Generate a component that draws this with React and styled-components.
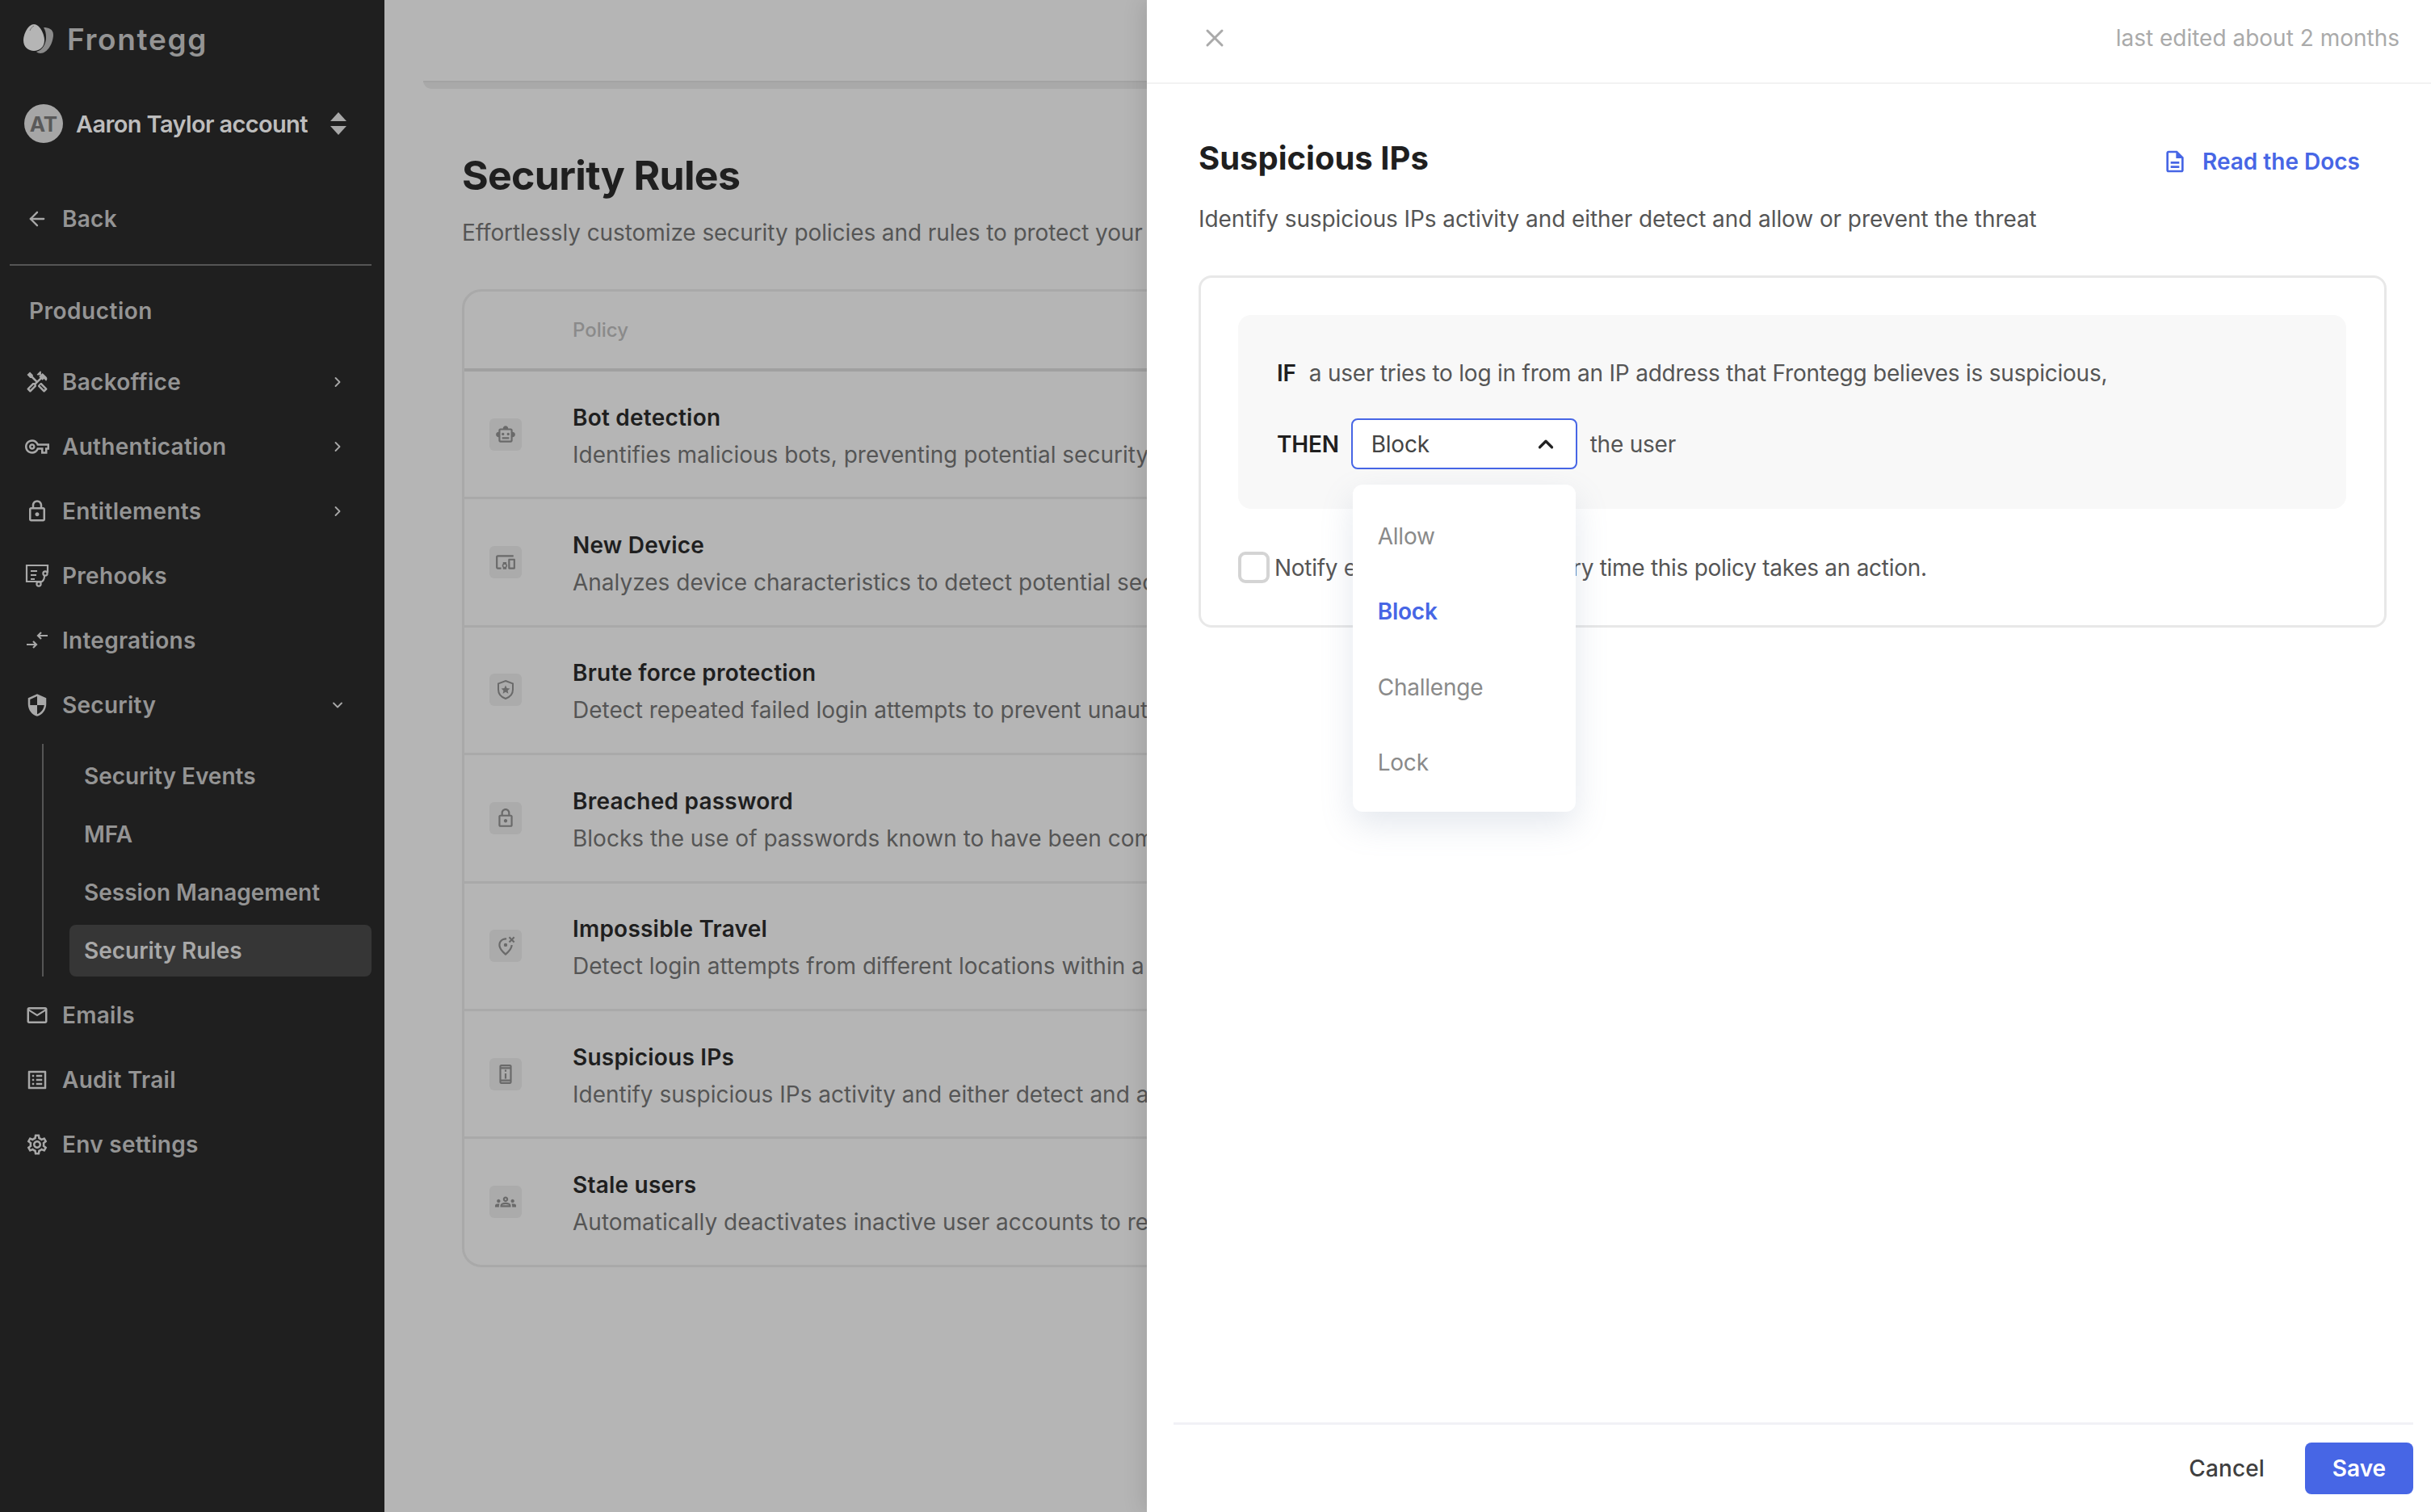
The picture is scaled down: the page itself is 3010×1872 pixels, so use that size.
import styled, { createGlobalStyle } from 'styled-components';
import { ArrowLeft, ChevronDown, ChevronRight, ChevronUp, X } from 'lucide-react';
import {
  MdOutlineHandyman,
  MdOutlineVpnKey,
  MdOutlineLock,
  MdSecurity,
  MdOutlineMailOutline,
  MdOutlineListAlt,
  MdOutlineSettings,
  MdOutlineSmartToy,
  MdOutlineDevicesOther,
  MdOutlineWrongLocation,
  MdOutlinePermDeviceInformation,
  MdOutlineGroups,
  MdOutlineDescription,
} from 'react-icons/md';

const GlobalStyle = createGlobalStyle`
  html, body {
    margin: 0;
    height: 100%;
    font-family: Inter, "Liberation Sans", sans-serif;
  }
  * { box-sizing: border-box; }
`;

const Page = styled.div`
  position: relative;
  display: flex;
  width: 3010px;
  height: 1872px;
  overflow: hidden;
  background: #b5b5b5;
`;

const Sidebar = styled.aside`
  flex: 0 0 476px;
  padding-right: 16px;
  background: #1f1f1f;
  color: #949494;
`;

const LogoRow = styled.div`
  display: flex;
  align-items: center;
  gap: 16px;
  height: 96px;
  padding-left: 29px;
`;

const LogoText = styled.span`
  font-size: 37px;
  font-weight: 600;
  letter-spacing: 0.045em;
  color: #949494;
`;

const AccountRow = styled.div`
  display: flex;
  align-items: center;
  height: 80px;
  margin-top: 17px;
  padding-left: 30px;
`;

const Avatar = styled.span`
  display: flex;
  align-items: center;
  justify-content: center;
  flex: 0 0 48px;
  height: 48px;
  border-radius: 50%;
  background: #a6a6a6;
  color: #5a5a5a;
  font-size: 26px;
  font-weight: 700;
`;

const AccountName = styled.span`
  flex: 0 0 331px;
  padding-left: 16px;
  font-size: 29px;
  font-weight: 600;
  letter-spacing: -0.022em;
  color: #bdbdbd;
`;

const NavRow = styled.div`
  display: flex;
  align-items: center;
  height: 80px;
  padding-left: 31px;
  font-size: 28px;
  font-weight: 600;
  letter-spacing: 0.01em;
  color: #949494;
`;

const BackRow = styled(NavRow)`
  margin-top: 38px;
`;

const NavIcon = styled.span`
  display: flex;
  align-items: center;
  justify-content: center;
  flex: 0 0 30px;
  width: 30px;
  height: 30px;
  margin-right: 16px;
  color: #a8a8a8;
`;

const NavLabel = styled.span`
  flex: 1;
`;

const NavChevron = styled.span`
  display: flex;
  width: 20px;
  margin-right: 32px;
  color: #a8a8a8;
`;

const Divider = styled.div`
  height: 2px;
  margin: 16px 0 16px 12px;
  background: #555;
`;

const EnvLabel = styled.div`
  display: flex;
  align-items: center;
  height: 80px;
  margin-bottom: 8px;
  padding-left: 36px;
  font-size: 28px;
  font-weight: 600;
  letter-spacing: 0.018em;
  color: #949494;
`;

const SubList = styled.div`
  display: flex;
  flex-direction: column;
  gap: 8px;
  margin: 8px 0 8px 52px;
  padding: 8px 0 0 32px;
  border-left: 2px solid #555;
`;

const SubItem = styled.div`
  display: flex;
  align-items: center;
  height: 64px;
  padding-left: 18px;
  border-radius: 8px;
  font-size: 28px;
  font-weight: 600;
  color: ${(p) => (p.$active ? '#a8a8a8' : '#949494')};
  background: ${(p) => (p.$active ? '#363636' : 'transparent')};
`;

const Main = styled.main`
  flex: 1;
  min-width: 0;
  padding-left: 96px;
`;

const TopStrip = styled.div`
  height: 10px;
  margin: 100px 0 0 -48px;
  border-top: 2px solid #a3a3a3;
  border-bottom-left-radius: 10px;
  background: #a9a9a9;
`;

const PageTitle = styled.h1`
  margin: 77px 0 0;
  font-size: 50px;
  line-height: 60px;
  font-weight: 700;
  letter-spacing: -0.014em;
  color: #1f1f1f;
`;

const PageLead = styled.p`
  margin: 21px 0 0;
  font-size: 28px;
  line-height: 40px;
  letter-spacing: -0.003em;
  white-space: nowrap;
  color: #555;
`;

const RulesTable = styled.div`
  width: 2380px;
  margin-top: 50px;
  border: 3px solid #a9a9a9;
  border-radius: 24px;
`;

const TableHead = styled.div`
  display: flex;
  align-items: center;
  height: 99px;
  padding-left: 134px;
  border-bottom: 4px solid #a0a0a0;
  font-size: 24px;
  font-weight: 500;
  color: #8a8a8a;
`;

const RuleRow = styled.div`
  display: flex;
  align-items: center;
  height: ${(p) => (p.$last ? '156px' : '158.4px')};
  padding-left: 31px;
  border-bottom: ${(p) => (p.$last ? 'none' : '3px solid #a9a9a9')};
`;

const RuleIcon = styled.span`
  display: flex;
  align-items: center;
  justify-content: center;
  width: 40px;
  height: 40px;
  margin-right: 63px;
  border-radius: 6px;
  background: #ababab;
  color: #6a6a6a;
`;

const RuleText = styled.div`
  display: flex;
  flex-direction: column;
  gap: 6px;
  padding-top: 4px;
  white-space: nowrap;
`;

const RuleTitle = styled.span`
  font-size: 28px;
  line-height: 40px;
  font-weight: 600;
  letter-spacing: 0.008em;
  color: #1f1f1f;
`;

const RuleDesc = styled.span`
  font-size: 28px;
  line-height: 40px;
  color: #555;
`;

const Drawer = styled.section`
  position: absolute;
  top: 0;
  right: 0;
  bottom: 0;
  display: flex;
  flex-direction: column;
  width: 1590px;
  background: #fff;
  box-shadow: -6px 0 24px rgba(0, 0, 0, 0.1);
`;

const DrawerHead = styled.header`
  display: flex;
  align-items: center;
  justify-content: space-between;
  flex: 0 0 104px;
  padding: 0 39px 8px 66px;
  border-bottom: 2px solid #f2f2f2;
  color: #aaa;
`;

const EditedAt = styled.span`
  font-size: 28px;
  color: #aaa;
`;

const DrawerBody = styled.div`
  flex: 1;
  padding: 0 55px 0 64px;
`;

const TitleRow = styled.div`
  display: flex;
  align-items: center;
  justify-content: space-between;
  height: 60px;
  margin-top: 61px;
  padding-right: 33px;
`;

const DrawerTitle = styled.h2`
  margin: 0;
  font-size: 40px;
  font-weight: 700;
  color: #1f1f1f;
`;

const DocsLink = styled.a`
  display: flex;
  align-items: center;
  gap: 18px;
  margin-top: 10px;
  font-size: 28px;
  font-weight: 600;
  color: #4766e5;
`;

const DrawerLead = styled.p`
  margin: 26px 0 0;
  font-size: 28px;
  line-height: 40px;
  letter-spacing: -0.003em;
  color: #555;
`;

const PolicyCard = styled.div`
  margin-top: 50px;
  padding: 46px 47px 52px 46px;
  border: 3px solid #e8e8e8;
  border-radius: 16px;
`;

const ConditionBox = styled.div`
  display: flex;
  flex-direction: column;
  gap: 39px;
  padding: 55px 48px 49px;
  border-radius: 16px;
  background: #f8f8f8;
`;

const ConditionRow = styled.div`
  display: flex;
  align-items: center;
  font-size: 28px;
  letter-spacing: -0.008em;
  color: #555;
`;

const Keyword = styled.span`
  margin-right: ${(p) => p.$gap}px;
  font-weight: 600;
  color: #1f1f1f;
`;

const SelectBox = styled.div`
  position: relative;
  display: flex;
  align-items: center;
  justify-content: space-between;
  width: 280px;
  height: 63px;
  margin-right: 16px;
  padding: 0 22px 0 23px;
  border: 2px solid #4766e5;
  border-radius: 8px;
  background: #fff;
  color: #444;
`;

const Menu = styled.ul`
  position: absolute;
  top: 80px;
  left: 0;
  width: 276px;
  height: 405px;
  margin: 0;
  padding: 17px 0 0;
  border-radius: 12px;
  background: #fff;
  box-shadow: 0 16px 40px rgba(120, 140, 170, 0.2);
  list-style: none;
`;

const MenuItem = styled.li`
  display: flex;
  align-items: center;
  height: 93.5px;
  padding-left: 31px;
  font-weight: ${(p) => (p.$selected ? 600 : 400)};
  color: ${(p) => (p.$selected ? '#4766e5' : '#8a8a8a')};
`;

const NotifyRow = styled.label`
  display: flex;
  align-items: center;
  gap: 6px;
  margin-top: 53px;
  font-size: 28px;
  letter-spacing: -0.01em;
  color: #555;
`;

const CheckBox = styled.span`
  width: 39px;
  height: 39px;
  border: 4px solid #d4d4d4;
  border-radius: 9px;
`;

const DrawerFooter = styled.footer`
  display: flex;
  align-items: center;
  justify-content: flex-end;
  gap: 50px;
  flex: 0 0 111px;
  margin: 0 22px 0 33px;
  border-top: 3px solid #f1f1f6;
`;

const CancelButton = styled.button`
  padding: 0;
  border: none;
  background: none;
  font: 500 28px Inter, sans-serif;
  letter-spacing: 0.005em;
  color: #3f3f3f;
`;

const SaveButton = styled.button`
  width: 134px;
  height: 64px;
  border: none;
  border-radius: 8px;
  background: #4766e5;
  font: 600 28px Inter, sans-serif;
  color: #fff;
`;

const EggLogo = () => (
  <svg width="38" height="38" viewBox="0 0 38 38">
    <path d="M25 5c6 0 12 2 12 9 0 10-7 23-16 23-2 0-4-1-5-2 8-2 12-10 12-18 0-5-1-9-3-12z" fill="#8a8a8a" />
    <path d="M13 1c7 0 13 12 13 20 0 8-6 13-13 13S0 29 0 21C0 13 6 1 13 1z" fill="#b5b5b5" />
    <path d="M8 9c1-3 3-5 5-6" fill="none" stroke="#777" strokeWidth="1" />
  </svg>
);

const UpDown = () => (
  <svg width="20" height="28" viewBox="0 0 20 28" fill="#a8a8a8">
    <path d="M10 0l10 11H0z" />
    <path d="M10 28L0 17h20z" />
  </svg>
);

const PrehooksIcon = () => (
  <svg width="30" height="30" viewBox="0 0 30 30" fill="none" stroke="#a8a8a8" strokeWidth="2.2">
    <path d="M20 22H2V2h26v9" />
    <path d="M7 9h8M7 14h7M7 19h5" />
    <circle cx="25" cy="12" r="2.6" />
    <circle cx="17" cy="25" r="2.6" />
    <path d="M24 15c0 5-2 7-5 8" />
  </svg>
);

const IntegrationsIcon = () => (
  <svg width="30" height="30" viewBox="0 0 30 30" fill="none" stroke="#a8a8a8" strokeWidth="2.2">
    <path d="M2 20h12M10 16l4 4-4 4" />
    <path d="M28 9H16M20 5l-4 4 4 4" />
  </svg>
);

const ShieldStar = () => (
  <svg width="26" height="26" viewBox="0 0 26 26">
    <path d="M13 2l9 3.4v7.4c0 5-3.6 9.3-9 11.2-5.4-1.900-9-6.200-9-11.200V5.400z" fill="none" stroke="#6a6a6a" strokeWidth="2" />
    <path d="M13 7.500l1.600 3.500 3.800.4-2.800 2.600.8 3.800-3.400-2-3.400 2 .8-3.800-2.800-2.600 3.800-.4z" fill="#6a6a6a" />
  </svg>
);

const navTop = [
  { label: 'Backoffice', icon: <MdOutlineHandyman size={30} />, chevron: true },
  { label: 'Authentication', icon: <MdOutlineVpnKey size={32} />, chevron: true },
  { label: 'Entitlements', icon: <MdOutlineLock size={32} />, chevron: true },
  { label: 'Prehooks', icon: <PrehooksIcon /> },
  { label: 'Integrations', icon: <IntegrationsIcon /> },
];

const navBottom = [
  { label: 'Emails', icon: <MdOutlineMailOutline size={32} /> },
  { label: 'Audit Trail', icon: <MdOutlineListAlt size={30} /> },
  { label: 'Env settings', icon: <MdOutlineSettings size={32} /> },
];

const subItems = ['Security Events', 'MFA', 'Session Management', 'Security Rules'];

const rules = [
  { title: 'Bot detection', desc: 'Identifies malicious bots, preventing potential security breaches', icon: <MdOutlineSmartToy size={26} /> },
  { title: 'New Device', desc: 'Analyzes device characteristics to detect potential security threats', icon: <MdOutlineDevicesOther size={26} /> },
  { title: 'Brute force protection', desc: 'Detect repeated failed login attempts to prevent unauthorized access', icon: <ShieldStar /> },
  { title: 'Breached password', desc: 'Blocks the use of passwords known to have been compromised', icon: <MdOutlineLock size={26} /> },
  { title: 'Impossible Travel', desc: 'Detect login attempts from different locations within a short time', icon: <MdOutlineWrongLocation size={26} /> },
  { title: 'Suspicious IPs', desc: 'Identify suspicious IPs activity and either detect and allow or prevent the threat', icon: <MdOutlinePermDeviceInformation size={26} /> },
  { title: 'Stale users', desc: 'Automatically deactivates inactive user accounts to reduce risk', icon: <MdOutlineGroups size={26} /> },
];

const options = ['Allow', 'Block', 'Challenge', 'Lock'];

const NavEntry = ({ item }) => (
  <NavRow>
    <NavIcon>{item.icon}</NavIcon>
    <NavLabel>{item.label}</NavLabel>
    {item.chevron && (
      <NavChevron>
        <ChevronRight size={20} strokeWidth={2.2} />
      </NavChevron>
    )}
  </NavRow>
);

const App = () => (
  <Page>
    <GlobalStyle />
    <Sidebar>
      <LogoRow>
        <EggLogo />
        <LogoText>Frontegg</LogoText>
      </LogoRow>
      <AccountRow>
        <Avatar>AT</Avatar>
        <AccountName>Aaron Taylor account</AccountName>
        <UpDown />
      </AccountRow>
      <BackRow>
        <NavIcon>
          <ArrowLeft size={28} strokeWidth={2} />
        </NavIcon>
        <NavLabel>Back</NavLabel>
      </BackRow>
      <Divider />
      <EnvLabel>Production</EnvLabel>
      {navTop.map((item) => (
        <NavEntry key={item.label} item={item} />
      ))}
      <NavRow>
        <NavIcon>
          <MdSecurity size={30} />
        </NavIcon>
        <NavLabel>Security</NavLabel>
        <NavChevron>
          <ChevronDown size={20} strokeWidth={2.2} />
        </NavChevron>
      </NavRow>
      <SubList>
        {subItems.map((label) => (
          <SubItem key={label} $active={label === 'Security Rules'}>
            {label}
          </SubItem>
        ))}
      </SubList>
      {navBottom.map((item) => (
        <NavEntry key={item.label} item={item} />
      ))}
    </Sidebar>

    <Main>
      <TopStrip />
      <PageTitle>Security Rules</PageTitle>
      <PageLead>Effortlessly customize security policies and rules to protect your application</PageLead>
      <RulesTable>
        <TableHead>Policy</TableHead>
        {rules.map((rule, i) => (
          <RuleRow key={rule.title} $last={i === rules.length - 1}>
            <RuleIcon>{rule.icon}</RuleIcon>
            <RuleText>
              <RuleTitle>{rule.title}</RuleTitle>
              <RuleDesc>{rule.desc}</RuleDesc>
            </RuleText>
          </RuleRow>
        ))}
      </RulesTable>
    </Main>

    <Drawer>
      <DrawerHead>
        <X size={36} strokeWidth={2} />
        <EditedAt>last edited about 2 months</EditedAt>
      </DrawerHead>
      <DrawerBody>
        <TitleRow>
          <DrawerTitle>Suspicious IPs</DrawerTitle>
          <DocsLink>
            <MdOutlineDescription size={32} />
            Read the Docs
          </DocsLink>
        </TitleRow>
        <DrawerLead>Identify suspicious IPs activity and either detect and allow or prevent the threat</DrawerLead>
        <PolicyCard>
          <ConditionBox>
            <ConditionRow>
              <Keyword $gap={16}>IF</Keyword>
              a user tries to log in from an IP address that Frontegg believes is suspicious,
            </ConditionRow>
            <ConditionRow>
              <Keyword $gap={15}>THEN</Keyword>
              <SelectBox>
                Block
                <ChevronUp size={30} strokeWidth={2.6} color="#222" />
                <Menu>
                  {options.map((option) => (
                    <MenuItem key={option} $selected={option === 'Block'}>
                      {option}
                    </MenuItem>
                  ))}
                </Menu>
              </SelectBox>
              the user
            </ConditionRow>
          </ConditionBox>
          <NotifyRow>
            <CheckBox />
            Notify email subscribers every time this policy takes an action.
          </NotifyRow>
        </PolicyCard>
      </DrawerBody>
      <DrawerFooter>
        <CancelButton>Cancel</CancelButton>
        <SaveButton>Save</SaveButton>
      </DrawerFooter>
    </Drawer>
  </Page>
);

export default App;
